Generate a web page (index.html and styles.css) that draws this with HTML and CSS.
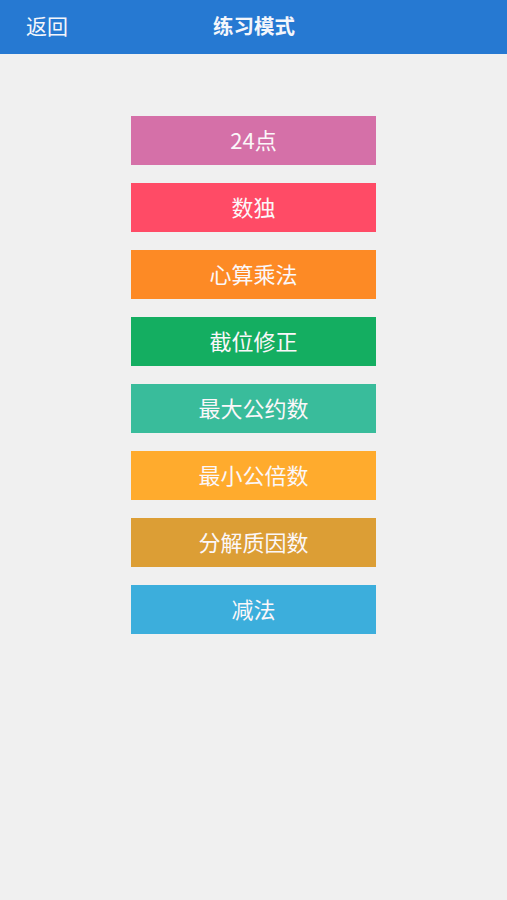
FILE: index.html
```html
<!DOCTYPE html>
<html lang="zh-CN">
<head>
<meta charset="utf-8">
<title>练习模式</title>
<link rel="stylesheet" href="styles.css">
</head>
<body>
<header class="nav">
  <span class="back">返回</span>
  <span class="title">练习模式</span>
</header>
<main class="list">
  <div class="btn c1">24点</div>
  <div class="btn c2">数独</div>
  <div class="btn c3">心算乘法</div>
  <div class="btn c4">截位修正</div>
  <div class="btn c5">最大公约数</div>
  <div class="btn c6">最小公倍数</div>
  <div class="btn c7">分解质因数</div>
  <div class="btn c8">减法</div>
</main>
</body>
</html>
```
FILE: styles.css
```css
html, body {
  margin: 0;
  padding: 0;
  background: #f0f0f0;
  font-family: "Noto Sans CJK SC", "Noto Sans", sans-serif;
  height: 900px;
}
.nav {
  position: relative;
  height: 54px;
  box-sizing: border-box;
  padding-bottom: 3px;
  background: #2679d2;
  color: #f4f6fb;
  display: flex;
  align-items: center;
  justify-content: center;
}
.back {
  position: absolute;
  left: 26px;
  top: 0;
  line-height: 50px;
  font-size: 21px;
}
.title {
  font-size: 20.5px;
  font-weight: 700;
  margin-left: 1px;
  line-height: 1;
}
.list {
  display: flex;
  flex-direction: column;
  align-items: center;
  gap: 18px;
  padding-top: 62px;
}
.btn {
  width: 245px;
  height: 49px;
  box-sizing: border-box;
  padding-bottom: 4px;
  display: flex;
  align-items: center;
  justify-content: center;
  color: #fbf7f9;
  font-size: 22px;
  line-height: 1;
}
.c1 { background: #d570a8; }
.c2 { background: #ff4b66; }
.c3 { background: #fd8a25; }
.c4 { background: #14ae61; }
.c5 { background: #39bc9b; }
.c6 { background: #ffab2d; }
.c7 { background: #dc9e35; }
.c8 { background: #3caedc; }
```
